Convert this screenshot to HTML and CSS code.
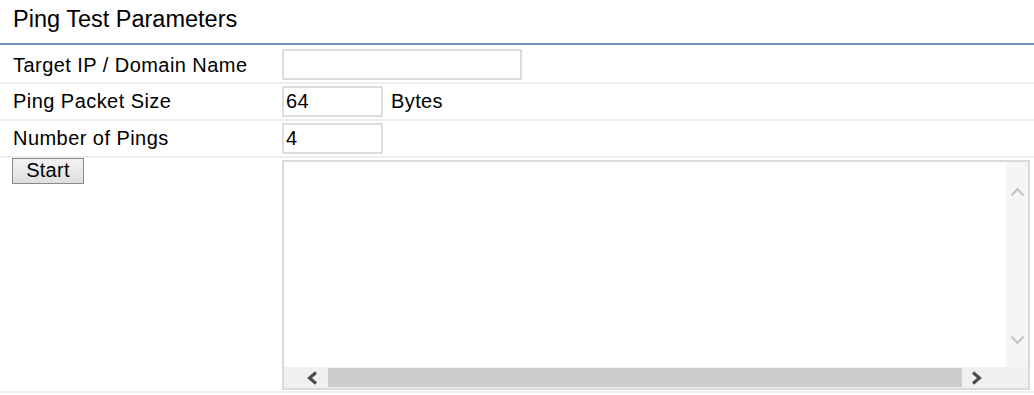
FILE: index.html
```html
<!DOCTYPE html>
<html>
<head>
<meta charset="utf-8">
<link rel="stylesheet" href="styles.css">
</head>
<body>
<div class="page">
  <h2 class="title">Ping Test Parameters</h2>
  <div class="params">
    <div class="row row-first">
      <div class="label">Target IP / Domain Name</div>
      <div class="field"><input class="inp inp-wide" type="text"></div>
    </div>
    <div class="row">
      <div class="label">Ping Packet Size</div>
      <div class="field"><input class="inp inp-short" type="text" value="64"><span class="unit">Bytes</span></div>
    </div>
    <div class="row">
      <div class="label">Number of Pings</div>
      <div class="field"><input class="inp inp-short" type="text" value="4"></div>
    </div>
    <div class="row row-output">
      <div class="label label-top"><button class="btn" type="button">Start</button></div>
      <div class="field field-top">
        <div class="output">
          <div class="output-body"></div>
          <div class="vbar">
            <span class="varrow varrow-up"><svg width="15" height="10" viewBox="0 0 15 10"><polyline points="1.5,8.5 7.5,2 13.5,8.5" fill="none" stroke="#c2c2c2" stroke-width="2"/></svg></span>
            <span class="varrow varrow-down"><svg width="15" height="10" viewBox="0 0 15 10"><polyline points="1.5,1.5 7.5,8 13.5,1.5" fill="none" stroke="#c2c2c2" stroke-width="2"/></svg></span>
          </div>
          <div class="hbar">
            <span class="harrow harrow-left"><svg width="12" height="14" viewBox="0 0 12 14"><polyline points="10,1.5 3.5,7 10,12.5" fill="none" stroke="#4a4a4a" stroke-width="3"/></svg></span>
            <span class="thumb"></span>
            <span class="harrow harrow-right"><svg width="12" height="14" viewBox="0 0 12 14"><polyline points="2,1.5 8.5,7 2,12.5" fill="none" stroke="#4a4a4a" stroke-width="3"/></svg></span>
          </div>
          <div class="corner"></div>
        </div>
      </div>
    </div>
  </div>
</div>
</body>
</html>
```

FILE: styles.css
```css
html, body {
  margin: 0;
  padding: 0;
  background: #ffffff;
}

body {
  font-family: "Liberation Sans", Arial, sans-serif;
  color: #000000;
}

.page {
  width: 1034px;
}

.title {
  margin: 0;
  padding: 7px 0 12px 13px;
  font-size: 23.5px;
  font-weight: normal;
  line-height: 24px;
  border-bottom: 2px solid #7490c2;
}

.params {
  display: flex;
  flex-direction: column;
}

.row {
  display: grid;
  grid-template-columns: 282px 1fr;
  border-bottom: 2px solid #eeeeee;
  min-height: 35px;
}

.row-first .label,
.row-first .field {
  padding-top: 4px;
}

.label {
  padding-left: 13px;
  font-size: 20px;
  letter-spacing: 0.45px;
  display: flex;
  align-items: center;
}

.label-top {
  align-items: flex-start;
  padding-left: 12px;
}

.field {
  display: flex;
  align-items: center;
  padding: 2px 0;
}

.field-top {
  align-items: flex-start;
  padding: 2px 0 1px 0;
}

.inp {
  box-sizing: border-box;
  height: 31px;
  border: 2px solid #dcdcdc;
  margin: 0;
  padding: 0 0 0 2px;
  font-family: "Liberation Sans", Arial, sans-serif;
  font-size: 20px;
  letter-spacing: 0.3px;
  color: #000000;
  background: #ffffff;
  outline: none;
}

.inp-wide {
  width: 240px;
}

.inp-short {
  width: 101px;
}

.unit {
  margin-left: 8px;
  font-size: 20px;
  letter-spacing: 0.4px;
}

.btn {
  box-sizing: border-box;
  width: 72px;
  height: 26px;
  margin: 0;
  padding: 0 0 2px 0;
  border: 1px solid #8a8a8a;
  background: linear-gradient(#f3f3f3, #dedede);
  font-family: "Liberation Sans", Arial, sans-serif;
  font-size: 20px;
  line-height: 22px;
  letter-spacing: 0.3px;
  color: #000000;
}

.output {
  box-sizing: border-box;
  width: 748px;
  height: 230px;
  border: 2px solid #dadada;
  display: grid;
  grid-template-columns: 1fr 22px;
  grid-template-rows: 1fr 21px;
  background: #ffffff;
}

.output-body {
  background: #ffffff;
}

.vbar {
  background: #f5f5f5;
  display: flex;
  flex-direction: column;
  justify-content: space-between;
  align-items: center;
  padding: 25px 0 22px 0;
}

.varrow {
  display: block;
  height: 10px;
}

.varrow svg,
.harrow svg {
  display: block;
}

.hbar {
  background: #f0f0f0;
  display: flex;
  align-items: stretch;
}

.harrow {
  display: flex;
  align-items: center;
  width: 44px;
  flex: none;
  box-sizing: border-box;
}

.harrow-left {
  padding-left: 22px;
}

.harrow-right {
  padding-left: 9px;
}

.thumb {
  flex: 1;
  background: #cdcdcd;
  margin: 1px 0;
}

.corner {
  background: #f0f0f0;
}
```
